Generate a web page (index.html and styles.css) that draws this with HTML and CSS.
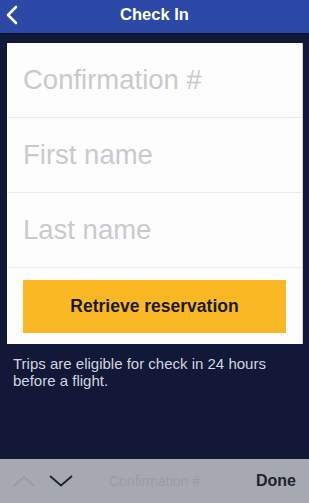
FILE: index.html
```html
<!DOCTYPE html>
<html>
<head>
<meta charset="utf-8">
<link rel="stylesheet" href="styles.css">
</head>
<body>
<div class="screen">
  <header class="topbar">
    <svg class="back" width="14" height="20" viewBox="0 0 14 20"><path d="M11 2 L3 10 L11 18" fill="none" stroke="#fff" stroke-width="2.6" stroke-linecap="round" stroke-linejoin="round"/></svg>
    <div class="title">Check In</div>
  </header>
  <main class="content">
    <div class="card">
      <div class="field">Confirmation #</div>
      <div class="field">First name</div>
      <div class="field">Last name</div>
      <div class="btn-wrap"><div class="btn">Retrieve reservation</div></div>
    </div>
    <p class="note">Trips are eligible for check in 24 hours before a flight.</p>
  </main>
  <footer class="kbbar">
    <div class="arrows">
      <svg width="22" height="12" viewBox="0 0 22 12"><path d="M1 11 L11 2 L21 11" fill="none" stroke="#979aa2" stroke-width="1.6"/></svg>
      <svg width="24" height="12" viewBox="0 0 24 12"><path d="M1 1 L12 10.5 L23 1" fill="none" stroke="#1c2030" stroke-width="1.8"/></svg>
    </div>
    <div class="kbtitle">Confirmation #</div>
    <div class="done">Done</div>
  </footer>
</div>
</body>
</html>
```
FILE: styles.css
```css
html, body { margin: 0; padding: 0; }
body { background: #111838; font-family: "Liberation Sans", Arial, sans-serif; }
.screen { width: 309px; height: 503px; display: flex; flex-direction: column; background: #111838; overflow: hidden; }
.topbar { height: 33px; background: #2c49a7; display: flex; align-items: center; justify-content: center; position: relative; box-shadow: 0 1px 2px #0a1230; }
.back { position: absolute; left: 5px; top: 5px; }
.title { color: #fff; font-weight: bold; font-size: 16.5px; margin-top: -4px; }
.content { flex: 1; padding: 10px 6px 0 7px; }
.card { background: #fdfdfd; border-right: 1px solid #c9ccd6; }
.field { height: 74px; border-bottom: 1px solid #ececee; display: flex; align-items: center; padding-left: 16px; font-size: 27.5px; color: #cacace; }
.btn-wrap { padding: 12px 16px 11px 16px; }
.btn { height: 53px; background: #fbb825; display: flex; align-items: center; justify-content: center; font-weight: bold; font-size: 17.5px; color: #1a1a1a; }
.note { margin: 11px 0 0 6px; color: #d2d5df; font-size: 15px; line-height: 17px; width: 275px; }
.kbbar { height: 44px; background: #a7a9b0; display: flex; align-items: center; padding: 0 13px; position: relative; }
.arrows { display: flex; gap: 14px; align-items: center; }
.kbtitle { position: absolute; left: 0; right: 0; text-align: center; font-size: 14px; color: #9a9ca4; pointer-events: none; }
.done { margin-left: auto; font-weight: bold; font-size: 16px; color: #1d2130; }
```
